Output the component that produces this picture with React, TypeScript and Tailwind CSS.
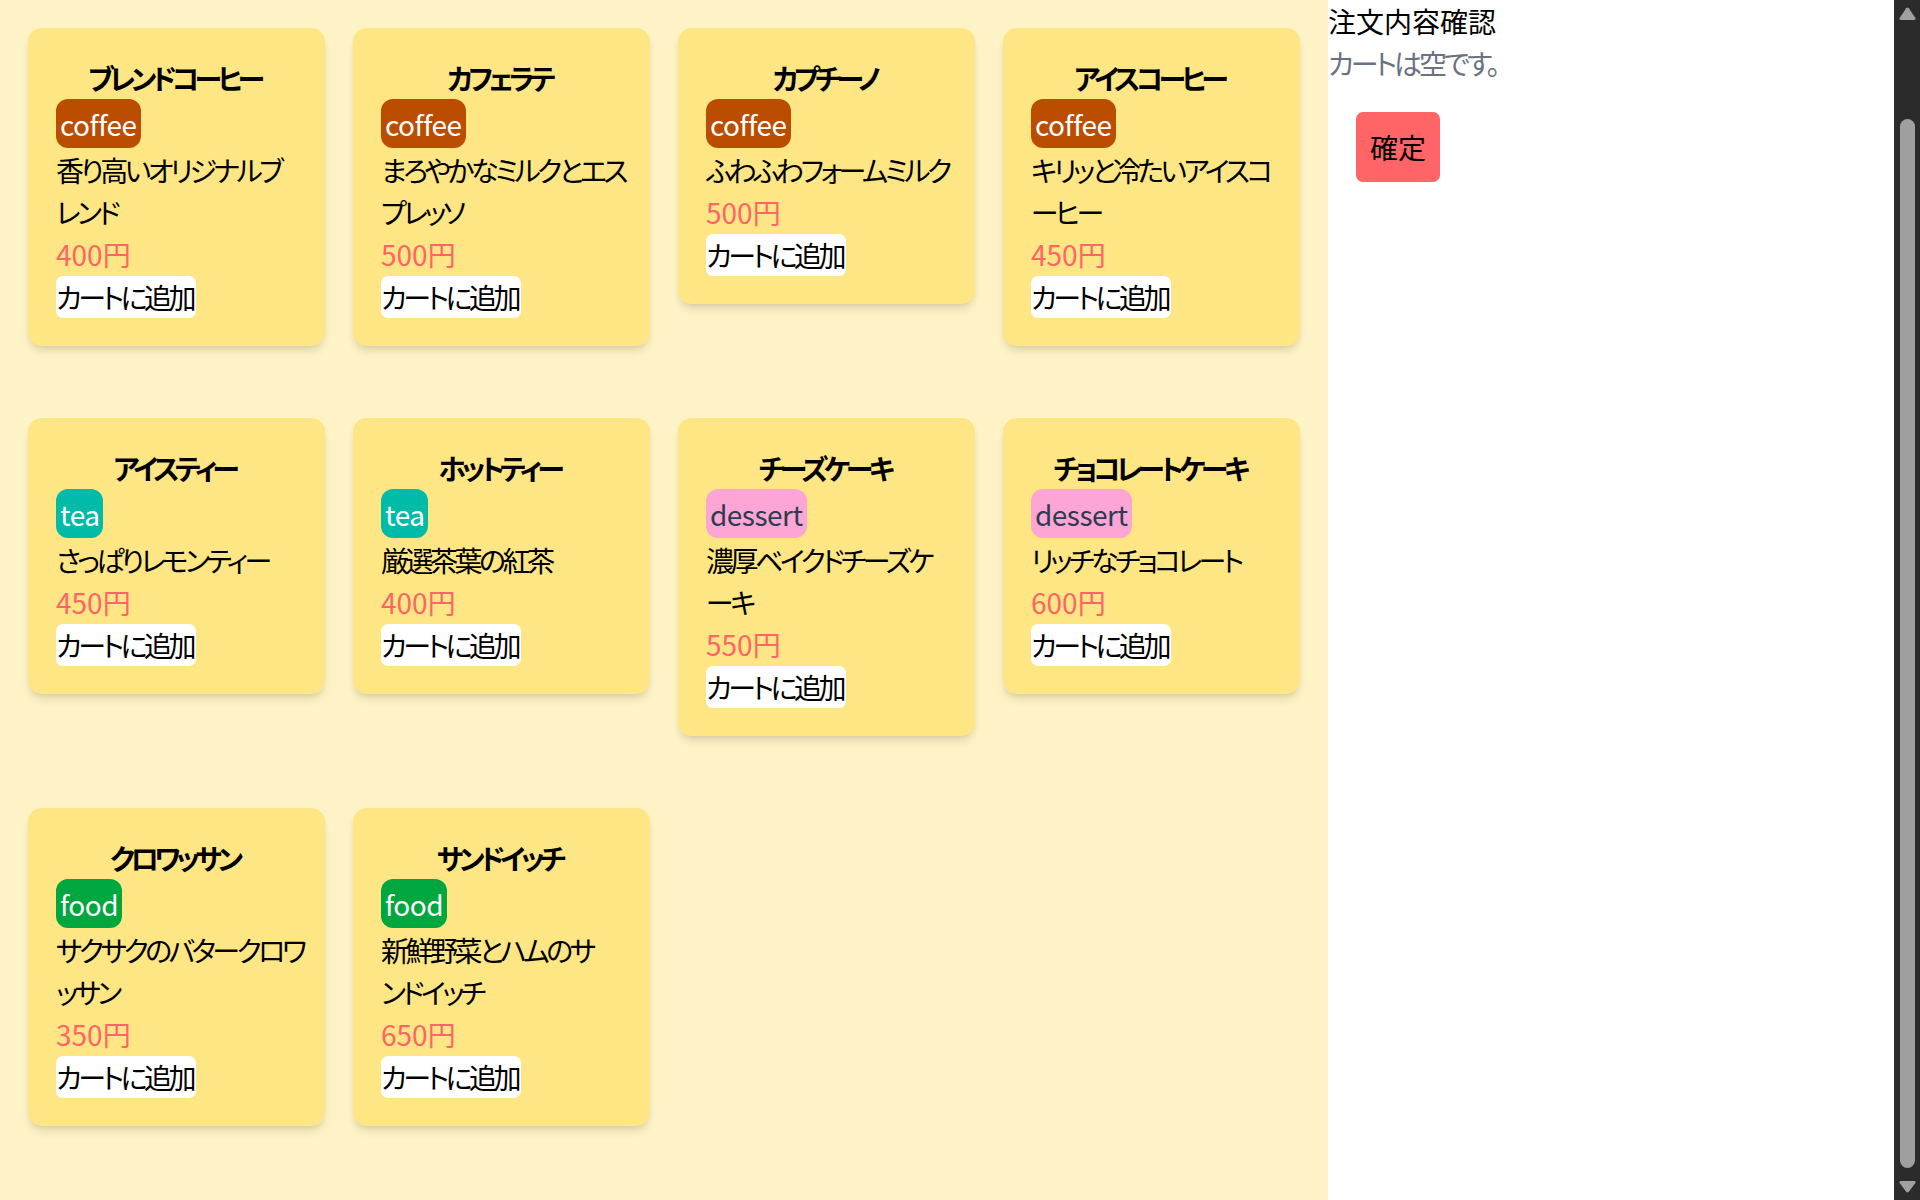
import React from "react";

type Cat = "coffee" | "tea" | "dessert" | "food";

const items: { name: string; cat: Cat; desc: string[]; price: number }[] = [
  { name: "ブレンドコーヒー", cat: "coffee", desc: ["香り高いオリジナルブ", "レンド"], price: 400 },
  { name: "カフェラテ", cat: "coffee", desc: ["まろやかなミルクとエス", "プレッソ"], price: 500 },
  { name: "カプチーノ", cat: "coffee", desc: ["ふわふわフォームミルク"], price: 500 },
  { name: "アイスコーヒー", cat: "coffee", desc: ["キリッと冷たいアイスコ", "ーヒー"], price: 450 },
  { name: "アイスティー", cat: "tea", desc: ["さっぱりレモンティー"], price: 450 },
  { name: "ホットティー", cat: "tea", desc: ["厳選茶葉の紅茶"], price: 400 },
  { name: "チーズケーキ", cat: "dessert", desc: ["濃厚ベイクドチーズケ", "ーキ"], price: 550 },
  { name: "チョコレートケーキ", cat: "dessert", desc: ["リッチなチョコレート"], price: 600 },
  { name: "クロワッサン", cat: "food", desc: ["サクサクのバタークロワ", "ッサン"], price: 350 },
  { name: "サンドイッチ", cat: "food", desc: ["新鮮野菜とハムのサ", "ンドイッチ"], price: 650 },
];

const badgeClass: Record<Cat, string> = {
  coffee: "bg-[#bb4d00] text-white",
  tea: "bg-[#00bba7] text-white",
  dessert: "bg-[#fda5d5] text-[#2f3b52]",
  food: "bg-[#00a63e] text-white",
};

function Card({ name, cat, desc, price }: { name: string; cat: Cat; desc: string[]; price: number }) {
  return (
    <div className="rounded-[14px] bg-[#fee685] px-[28px] pt-[28px] pb-[28px] shadow-[0_7px_10px_-2px_rgba(0,0,0,0.1),0_3px_7px_-3px_rgba(0,0,0,0.1)]">
      <h3 className="mt-[1px] pr-[4.5px] text-center font-bold tracking-[-4.5px]">{name}</h3>
      <div className="flex">
        <span className={`rounded-[12px] px-[4px] py-[3.5px] tracking-[-0.5px] ${badgeClass[cat]}`}>{cat}</span>
      </div>
      <p className="mt-[1px] tracking-[-3.5px]">
        {desc.map((line) => (
          <span key={line} className="block whitespace-nowrap">
            {line}
          </span>
        ))}
      </p>
      <p className="text-[#ff6467]">{price}円</p>
      <button className="mt-[1px] block h-[42px] rounded-[7px] bg-white pr-[3px] leading-[42px] tracking-[-3.5px] text-black">
        カートに追加
      </button>
    </div>
  );
}

export default function App() {
  return (
    <div className='flex h-[1200px] w-full overflow-hidden font-["Noto_Sans_CJK_JP",sans-serif] text-[28px] leading-[42px] text-black [font-feature-settings:"palt"]'>
      <main className="w-[1328px] shrink-0 bg-[#fef3c6] p-[28px]">
        <div className="grid grid-cols-4 items-start gap-x-[28px] gap-y-[72px]">
          {items.map((it) => (
            <Card key={it.name} {...it} />
          ))}
        </div>
      </main>
      <aside className="min-w-0 flex-1 bg-white">
        <h2>注文内容確認</h2>
        <p className="tracking-[-3px] text-[#6a7282]">カートは空です。</p>
        <button className="m-[28px] rounded-[7px] bg-[#ff6467] px-[14px] py-[14px] leading-[42px] text-black">確定</button>
      </aside>
      <div className="flex w-[26px] shrink-0 flex-col items-center bg-[#2b2b2b]">
        <svg className="mt-[7px] h-[13px] w-[17px]" viewBox="0 0 17 13">
          <path d="M7.2 1.2 Q8.5 -0.4 9.8 1.2 L16.4 11 Q17 13 15 13 L2 13 Q0 13 0.6 11 Z" fill="#a0a0a0" />
        </svg>
        <div className="mt-[99px] h-[1049px] w-[15px] rounded-full bg-[#9f9f9f]" />
        <svg className="mt-[13px] h-[12px] w-[17px]" viewBox="0 0 17 12">
          <path d="M7.2 10.8 Q8.5 12.4 9.8 10.8 L16.4 2 Q17 0 15 0 L2 0 Q0 0 0.6 2 Z" fill="#a0a0a0" />
        </svg>
      </div>
    </div>
  );
}
